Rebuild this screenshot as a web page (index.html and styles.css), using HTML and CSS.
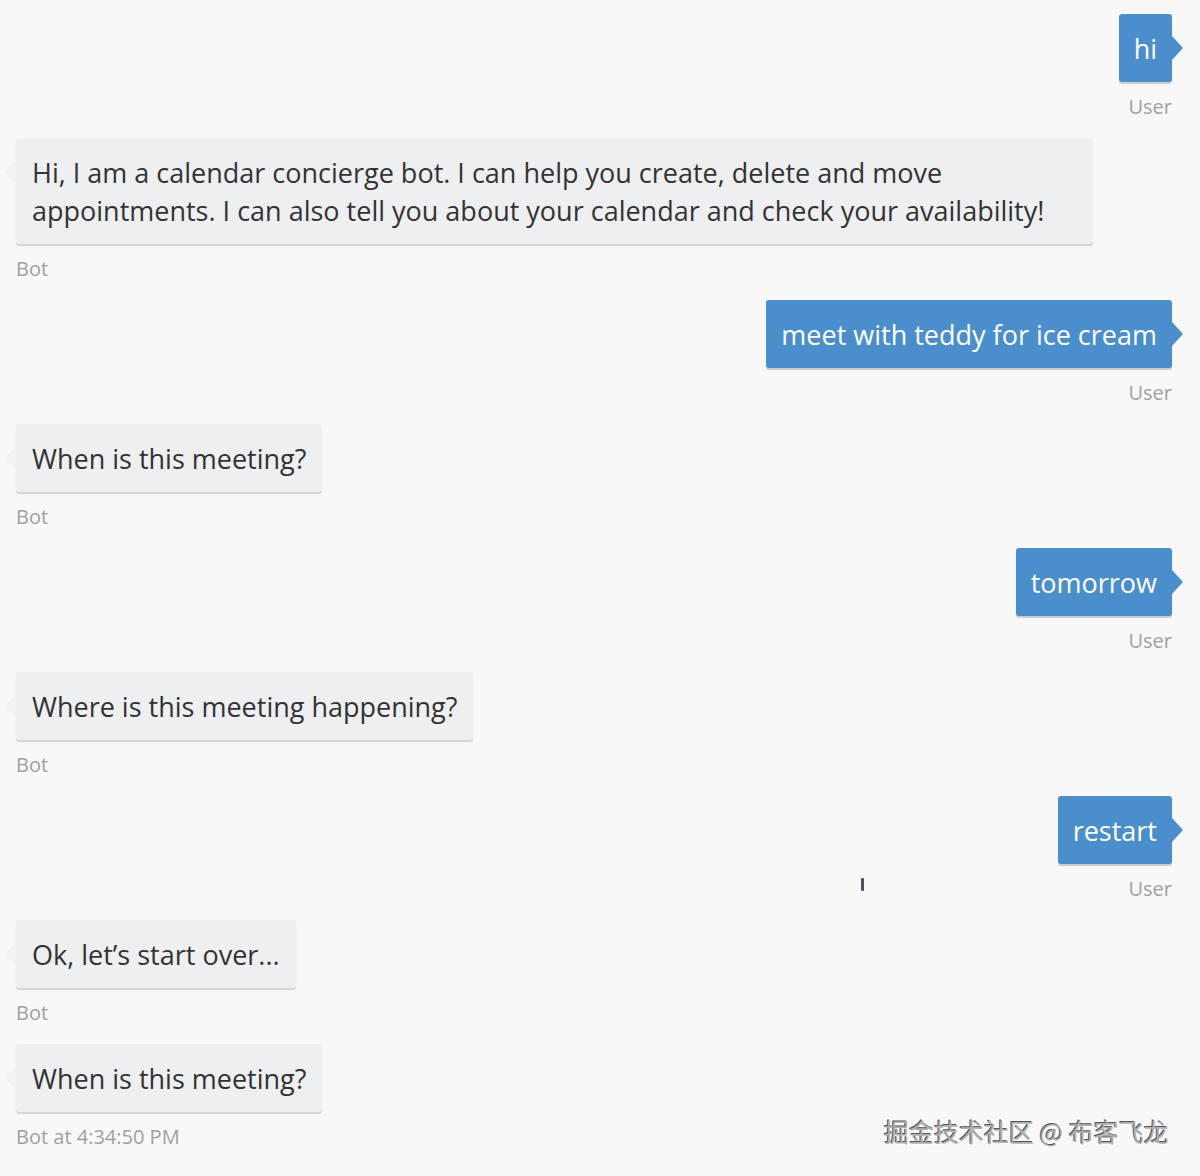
FILE: index.html
```html
<!DOCTYPE html>
<html lang="en">
<head>
<meta charset="utf-8">
<title>Chat</title>
<link rel="stylesheet" href="styles.css">
</head>
<body>
<div class="chat">
  <div class="msg user">
    <div class="bubble">hi</div>
    <div class="label">User</div>
  </div>
  <div class="msg bot">
    <div class="bubble">Hi, I am a calendar concierge bot. I can help you create, delete and move appointments. I can also tell you about your calendar and check your availability!</div>
    <div class="label">Bot</div>
  </div>
  <div class="msg user">
    <div class="bubble">meet with teddy for ice cream</div>
    <div class="label">User</div>
  </div>
  <div class="msg bot">
    <div class="bubble">When is this meeting?</div>
    <div class="label">Bot</div>
  </div>
  <div class="msg user">
    <div class="bubble">tomorrow</div>
    <div class="label">User</div>
  </div>
  <div class="msg bot">
    <div class="bubble">Where is this meeting happening?</div>
    <div class="label">Bot</div>
  </div>
  <div class="msg user">
    <div class="bubble">restart</div>
    <div class="label">User</div>
  </div>
  <div class="msg bot">
    <div class="bubble">Ok, let’s start over...</div>
    <div class="label">Bot</div>
  </div>
  <div class="msg bot">
    <div class="bubble">When is this meeting?</div>
    <div class="label">Bot at 4:34:50 PM</div>
  </div>
</div>
<div class="cursor"></div>
<div class="watermark">掘金技术社区 @ 布客飞龙</div>
</body>
</html>
```
FILE: styles.css
```css
html, body {
  margin: 0;
  padding: 0;
}
body {
  background: #f8f8f8;
  width: 1200px;
  height: 1176px;
  position: relative;
  overflow: hidden;
  font-family: "Open Sans", "Noto Sans", sans-serif;
}
.chat {
  display: flex;
  flex-direction: column;
  padding: 14px 28px 0 16px;
}
.msg {
  display: flex;
  flex-direction: column;
  margin-bottom: 17px;
}
.msg.user { align-items: flex-end; }
.msg.bot { align-items: flex-start; }
.bubble {
  position: relative;
  padding: 16px 16px 14px;
  font-size: 27px;
  line-height: 38px;
  border-radius: 3px;
  max-width: 1077px;
  box-sizing: border-box;
}
.user .bubble {
  background: #4a8fcb;
  color: #fff;
  padding: 16px 15px 14px;
  box-shadow: 0 2px 1px rgba(0,0,0,0.18);
}
.bot .bubble {
  background: #eeeff1;
  color: #333;
  box-shadow: 0 2px 1px rgba(0,0,0,0.14);
}
.bubble::after {
  content: "";
  position: absolute;
  top: 22px;
  border-top: 12px solid transparent;
  border-bottom: 12px solid transparent;
}
.user .bubble::after {
  right: -11px;
  border-left: 11px solid #4a8fcb;
}
.bot .bubble::after {
  left: -11px;
  border-right: 11px solid #f1f2f3;
}
.label {
  margin-top: 11px;
  font-size: 20px;
  line-height: 28px;
  color: #a0a0a0;
}
.cursor {
  position: absolute;
  left: 861px;
  top: 878px;
  width: 3px;
  height: 13px;
  background: #4a5060;
  border-radius: 1px;
}
.watermark {
  position: absolute;
  left: 884px;
  top: 1116px;
  font-family: "Noto Sans CJK SC", sans-serif;
  font-size: 25px;
  line-height: 30px;
  color: #b0b0b0;
  text-shadow: -1px -1px 0 #555, 1px 1px 0 #fff;
}
```
